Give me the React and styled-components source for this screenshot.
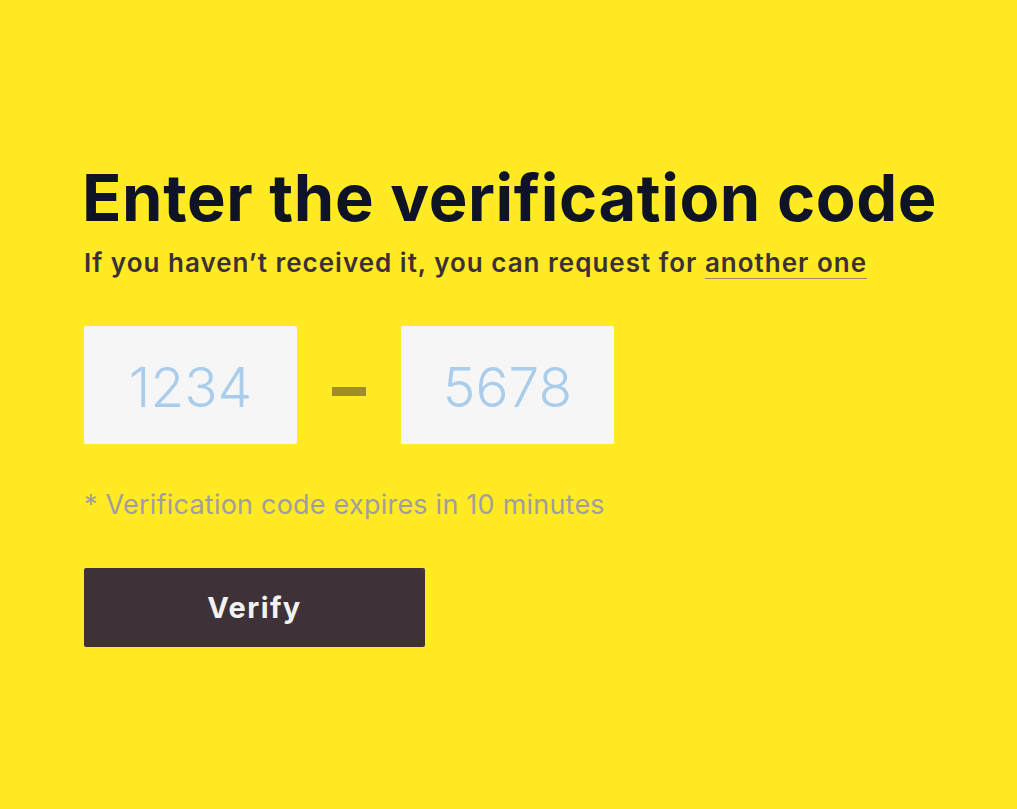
import styled, { createGlobalStyle } from "styled-components";

const GlobalStyle = createGlobalStyle`
  html, body {
    margin: 0;
    padding: 0;
    background: #ffea24;
  }
  body {
    font-family: Inter, "Open Sans", sans-serif;
  }
`;

const Page = styled.main`
  min-height: 809px;
  box-sizing: border-box;
  padding: 158px 0 0 84px;
  display: flex;
  flex-direction: column;
  align-items: flex-start;
`;

const Title = styled.h1`
  margin: 0 0 0 -2px;
  color: #0e1325;
  font-size: 65px;
  font-weight: 700;
  line-height: 80px;
  letter-spacing: 0.6px;
  white-space: nowrap;
`;

const Subtitle = styled.p`
  margin: 9px 0 0;
  color: #3d3035;
  font-size: 26px;
  font-weight: 600;
  line-height: 32px;
  letter-spacing: 1px;
  white-space: nowrap;
`;

const Link = styled.a`
  color: inherit;
  text-decoration: none;
  border-bottom: 1px solid #8f8a66;
`;

const CodeRow = styled.div`
  display: flex;
  align-items: center;
  margin-top: 47px;
  gap: 35px;
`;

const CodeBox = styled.div`
  width: 213px;
  height: 118px;
  box-sizing: border-box;
  padding-top: 4px;
  background: #f6f6f6;
  border-radius: 2px;
  display: flex;
  align-items: center;
  justify-content: center;
  color: #a9cdea;
  font-size: 55px;
  font-weight: 300;
`;

const Dash = styled.span`
  width: 34px;
  height: 9px;
  margin-top: 13px;
  background: #a08c2e;
`;

const Note = styled.p`
  margin: 44px 0 0;
  color: #a29d9f;
  font-size: 27px;
  font-weight: 400;
  line-height: 34px;
  letter-spacing: 0.22px;
`;

const Button = styled.button`
  margin-top: 46px;
  width: 341px;
  height: 79px;
  border: none;
  border-radius: 2px;
  background: #3e3238;
  color: #f2f2f2;
  font-family: inherit;
  font-size: 29px;
  font-weight: 700;
  letter-spacing: 1.4px;
  cursor: pointer;
`;

export default function App() {
  return (
    <>
      <GlobalStyle />
      <Page>
        <Title>Enter the verification code</Title>
        <Subtitle>
          If you haven’t received it, you can request for{" "}
          <Link href="#">another one</Link>
        </Subtitle>
        <CodeRow>
          <CodeBox>1234</CodeBox>
          <Dash />
          <CodeBox>5678</CodeBox>
        </CodeRow>
        <Note>* Verification code expires in 10 minutes</Note>
        <Button>Verify</Button>
      </Page>
    </>
  );
}
